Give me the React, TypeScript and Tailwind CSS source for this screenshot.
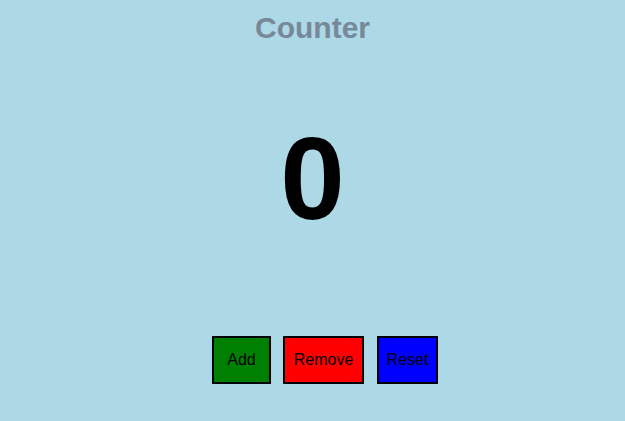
export default function App() {
  return (
    <div className="min-h-screen bg-[#add8e6] font-['Liberation_Sans',Arial,sans-serif] flex flex-col items-center pt-[11px]">
      <h1 className="text-[30px] leading-[34px] font-bold text-[#778899]">Counter</h1>
      <div className="mt-[76px] text-[116px] leading-none font-bold text-black">0</div>
      <div className="mt-[99px] flex gap-[12px] pl-[25px]">
        <button className="w-[59px] h-[48px] border-2 border-black bg-[#008000] text-[16px] text-black">
          Add
        </button>
        <button className="w-[81px] h-[48px] border-2 border-black bg-[#ff0000] text-[16px] text-black">
          Remove
        </button>
        <button className="ml-px w-[61px] h-[48px] border-2 border-black bg-[#0000ff] text-[16px] text-black">
          Reset
        </button>
      </div>
    </div>
  );
}
